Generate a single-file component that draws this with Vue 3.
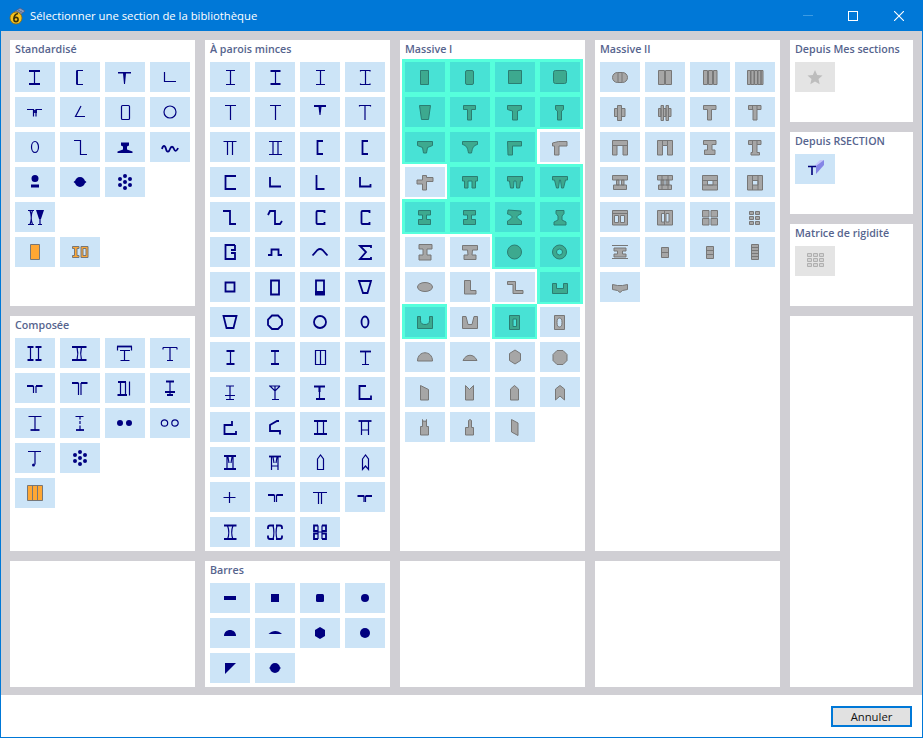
<template>
  <div class="window">
    <header class="titlebar">
      <svg class="app-icon" width="17" height="18" viewBox="0 0 17 18">
        <path d="M5 5l6-4 5 3-6 5z" fill="#8a9cc0" stroke="#46587f" stroke-width=".7" />
        <path d="M7 4l5 3M9 3l5 3M7 6l4-3M9 7l4-3" stroke="#46587f" stroke-width=".5" />
        <circle cx="7" cy="11" r="6" fill="#f6c21c" stroke="#8a6a10" stroke-width=".8" />
        <circle cx="7" cy="12.5" r="2.1" fill="none" stroke="#3c3208" stroke-width="1.6" />
        <path d="M5 12c0-3 1-5 4-5.5" fill="none" stroke="#3c3208" stroke-width="1.6" />
      </svg>
      <span class="title-text">Sélectionner une section de la bibliothèque</span>
      <div class="controls">
        <span class="ctl min"></span>
        <span class="ctl max"></span>
        <svg class="ctl-close" width="10" height="10" viewBox="0 0 10 10"><path d="M0 0l10 10M10 0L0 10" stroke="#fff" stroke-width="1.1" /></svg>
      </div>
    </header>

    <main class="board">
      <section v-for="p in panels" :key="p.id" class="panel" :class="p.id">
        <h3 v-if="p.title" class="panel-title">{{ p.title }}</h3>
        <div v-if="p.icons" class="tiles">
          <div
            v-for="(ic, i) in p.icons"
            :key="i"
            class="tile"
            :class="{ hl: p.hl && p.hl.includes(i), off: ic.off, first: ic.first }"
          >
            <svg width="40" height="30" viewBox="0 0 40 30">
              <path v-if="ic.f" class="fill" :d="ic.f" />
              <path v-if="ic.l" class="thin" :d="ic.l" />
              <path v-if="ic.b" class="bold" :d="ic.b" />
              <path v-if="ic.g" class="solid" fill-rule="evenodd" :d="ic.g" />
              <path v-if="ic.o" class="orange" fill-rule="evenodd" :d="ic.o" />
              <path v-if="ic.star" class="star" :d="ic.star" />
              <path v-if="ic.cells" class="cells" :d="ic.cells" />
              <template v-if="ic.bar">
                <path d="M19 12l6-6h4l-7 6z" fill="#c4c4fb" />
                <path d="M21 12l8-6v5l-8 9z" fill="#8585e6" />
                <path d="M13 12.5h8M17 12.5V21" fill="none" stroke="#00007a" stroke-width="1.6" />
              </template>
            </svg>
          </div>
        </div>
      </section>
    </main>

    <footer class="footer">
      <button class="cancel">Annuler</button>
    </footer>
  </div>
</template>

<script setup>
const R = (x, y, w, h) => `M${x} ${y}h${w}v${h}h${-w}z`
const O = (cx, cy, rx, ry = rx) =>
  `M${cx - rx} ${cy}a${rx} ${ry} 0 1 0 ${rx * 2} 0a${rx} ${ry} 0 1 0 ${-rx * 2} 0z`
const RR = (x, y, w, h, r) =>
  `M${x + r} ${y}h${w - 2 * r}a${r} ${r} 0 0 1 ${r} ${r}v${h - 2 * r}a${r} ${r} 0 0 1 ${-r} ${r}h${2 * r - w}a${r} ${r} 0 0 1 ${-r} ${-r}v${2 * r - h}a${r} ${r} 0 0 1 ${r} ${-r}z`
const dots = (r) =>
  [[20, 15], [20, 9], [20, 21], [15, 12], [25, 12], [15, 18], [25, 18]].map(([x, y]) => O(x, y, r)).join('')

const standard = [
  { b: 'M14 9h11M14 22h11', l: 'M19.5 9v13' },
  { l: 'M23 8.5h-6v14h6', b: 'M17 9v13' },
  { f: 'M13 10h13v1.5h-5L20 22h-1l-1-10.5h-5z' },
  { l: 'M14.5 10v9.5H26' },
  { l: 'M12 12.5h6.5v7M27 12.5h-6v7', b: 'M19 13v3M21 13v3' },
  { l: 'M21 9l-5.5 10.5H25' },
  { l: RR(16.5, 8.5, 8, 14, 1) },
  { l: O(20, 15, 6) },
  { l: O(20, 15, 3.5, 5.5) },
  { l: 'M14 8.5h6.5v14H27' },
  { f: 'M16 10.5h8v3l-2 1v3l5.5 2v1.5h-15v-1.5l5.5-2v-3l-2-1z' },
  { b: 'M12 17c1-4 3-4 4 0s3 3 4 0 3-3 4 0 3 2 4-1' },
  { f: O(20, 11.5, 3.5) + R(16, 17.5, 8, 3) },
  { f: O(20, 15, 5) + 'M13.5 15l3 2.5v-5zM26.5 15l-3-2.5v5z' },
  { f: dots(2) },
  { first: true, f: 'M21 8h8l-3 9h-2z', l: 'M13 8.5h6M13 22.5h6M15 8.5c1.5 4 1.5 10 0 14M17.5 8.5c-1.5 4-1.5 10 0 14M23 22.5h4M25 15v7.5' },
  { first: true, o: R(15.5, 7.5, 9, 15) },
  { o: 'M12.5 9.5h6.5v2h-2v7h2v2h-6.5v-2h2v-7h-2zM21 9.5h7v11h-7zM23 11.5v7h3v-7z' }
]

const composite = [
  { b: 'M12.5 9h6M20.5 9h6M12.5 22h6M20.5 22h6', l: 'M15.5 9v13M23.5 9v13' },
  { b: 'M12 9h14.5M12 22h14.5', l: 'M17 9c1 4 1 9 0 13M21.5 9c-1 4-1 9 0 13' },
  { b: 'M12 8.5h15', l: 'M12.5 8.5v4M26.5 8.5v4M15 12.5h10M19.5 12.5v10M15.5 22.5h9' },
  { l: 'M13 9.5v2M27 9.5v2M13 9.5h14M20 9.5v13M17 22.5h6' },
  { b: 'M12 13h6.5M21 13h6.5', l: 'M18.5 13v7M21 13v7' },
  { b: 'M12 10h6.5M21 10h6.5', l: 'M18.5 10v12M21 10v12' },
  { b: 'M12.5 22h9.5M13 9h8', l: 'M15.5 9v13M20.5 9v13M24.5 8.5v14' },
  { b: 'M16 8.5h8M15 19h10M17 22h6', l: 'M20 8.5v13.5' },
  { l: 'M13.5 8.5h13M20 8.5v14', b: 'M15.5 22h9' },
  { l: 'M15.5 8.5h8M20 8.5v3M20 13v3M20 17.5v5', b: 'M16 22h8' },
  { f: O(15, 15, 3) + O(24, 15, 3) },
  { l: O(14.5, 15, 3.2) + O(25, 15, 3.2) },
  { l: 'M13 8.5h13M20 8.5v13', f: O(18.5, 22, 1.5) },
  { f: dots(2) },
  { first: true, o: R(12.5, 7.5, 15, 15) + 'M17.5 7.5v15M22.5 7.5v15' }
]

const thin = [
  { l: 'M16 8.5h9M16 22.5h9M20.5 8.5v14' },
  { b: 'M15.5 9h10M15.5 22h10', l: 'M20.5 9v13' },
  { l: 'M16 8.5h9M16 22.5h9M20.5 8.5v14' },
  { l: 'M15.5 9.5V8.5h9.5v1M15.5 21.5v1h9.5v-1M20.5 8.5v14' },
  { l: 'M15 8.5h11M20.5 8.5v14.5' },
  { l: 'M15 8.5h11M20.5 8.5v14.5' },
  { f: 'M14 8h12v2h-4.5l-1 8h-1l-1-8H14z', l: 'M20 10v5' },
  { l: 'M14.5 9.5v-1h11v1M20 8.5v14.5' },
  { l: 'M13.5 9.5h13M17.5 9.5V23M22.5 9.5V23' },
  { l: 'M14 9.5h13M14 22.5h13M18 9.5v13M23 9.5v13' },
  { b: 'M23 9h-5.5v13H23' },
  { b: 'M23 9h-5.5v13H23' },
  { b: 'M26 9H15.5v13H26' },
  { b: 'M15 10v9.5h11' },
  { b: 'M16.5 8v14h8' },
  { b: 'M15 10v9.5h10.5V17' },
  { b: 'M13 9h7v13h6' },
  { b: 'M13 13l2-4h5v13h5l2-3' },
  { b: 'M24.5 11V9h-7a1 1 0 0 0-1 1v11a1 1 0 0 0 1 1h7v-2' },
  { b: 'M24.5 11V9h-7a1 1 0 0 0-1 1v11a1 1 0 0 0 1 1h7v-2' },
  { b: 'M25 8H15.5v14H25v-6h-4M25 8v5h-4' },
  { b: 'M13 18h3.5v-5.5h7V18H27' },
  { b: 'M12.5 18.5l5-5.5q2.5-2 5 0l5 5.5' },
  { b: 'M26 11V9H15l6 6-6 7h11v-2' },
  { b: R(15.5, 10.5, 9, 9) },
  { b: R(16, 8.5, 8, 14) },
  { b: R(16, 8.5, 8, 14), f: R(15, 19, 10, 4) },
  { b: 'M14 9h12l-3.5 12h-4.5z' },
  { b: 'M13.5 9h13l-3 12h-7z' },
  { b: 'M17 8.5h6l4 4v5.5l-4 4h-6l-4-4v-5.5z' },
  { b: O(20, 15, 6) },
  { b: O(20, 15, 3.5, 5.5) },
  { b: 'M16.5 9h8M16.5 22h8', l: 'M20.5 9v13' },
  { b: 'M16 9h8M16 22h8', l: 'M20 9v13' },
  { l: R(15.5, 8.5, 10, 14) + 'M20.5 8.5v14', f: R(15, 8, 11, 1) },
  { l: 'M15 9.5h11M20.5 9.5v13M17 22.5h7', b: 'M15 9.5h11' },
  { l: 'M16 9h8M20 9v13M15 18.5h10M16 22.5h8' },
  { l: 'M14 9h11M20 9v13M17 22.5h7M15 9l5 5 5-5' },
  { b: 'M14 9.5h11M16 22h9', l: 'M19.5 9v13', f: R(18.5, 9, 2, 6) },
  { b: 'M21 9h-6.5v13H26v-3.5' },
  { b: 'M22 9v4h-7.5v9H26v-3' },
  { b: 'M24 9h-2l-7 4v6h10v3.5' },
  { b: 'M14 9h13M14 22h13', l: 'M17.5 9v13M23.5 9v13' },
  { b: 'M13.5 9h13', l: 'M16.5 9v14M23.5 9v14M16.5 18h7' },
  { b: 'M14 9h12M14 22h12', l: 'M17 9v13M23 9v13M18 10l1 6M22 10l-1 6' },
  { b: 'M14 9.5h12', l: 'M16.5 9.5V23M23 9.5V23M16.5 19h6.5M18 10l1 6M22 10l-1 6' },
  { l: 'M17.5 12l3-4 3 4v10.5h-6z' },
  { l: 'M17.5 12l3-4 3 4v10.5l-3-3.5-3 3.5z' },
  { l: 'M13.5 15.5h12M19.5 10v11' },
  { l: 'M13 13h6.5v7M28 13h-6.5v7', b: 'M13 13h6M22 13h6' },
  { l: 'M13 10.5h14M18.5 10.5V22M21.5 10.5V22' },
  { l: 'M12 14h7v6M27 14h-6.5v6', b: 'M13 14h6M21 14h6' },
  { b: 'M14 8.5h12.5M14 22h12.5', l: 'M17.5 8.5c1.5 4 1.5 10 0 14M23 8.5c-1.5 4-1.5 10 0 14' },
  { b: 'M19 8.5h-4a2 2 0 0 0-2 2V12M19 22h-4a2 2 0 0 1-2-2v-1.5M21 8.5h4a2 2 0 0 1 2 2V12M21 22h4a2 2 0 0 0 2-2v-1.5', l: 'M18 8.5c1 4 1 10 0 13.5M22 8.5c-1 4-1 10 0 13.5' },
  { b: 'M18 8.5h-4V14h4M18 22h-4v-5.5h4M22 8.5h4V14h-4M22 22h4v-5.5h-4', l: 'M18 8.5V22M22 8.5V22M18 15h4' }
]

const bars = [
  { f: R(14, 13, 12, 4) },
  { f: R(16, 11, 8, 8) },
  { f: RR(16, 11, 8, 8, 1.5) },
  { f: O(20, 15, 4) },
  { f: 'M14 18c0-8 12-8 12 0z' },
  { f: 'M13.5 16c4-4 9.5-4 13.5 0z' },
  { f: 'M20 9l5 3v6l-5 3-5-3v-6z' },
  { f: O(20, 15, 5) },
  { first: true, f: 'M15 10h11L15 21z' },
  { f: O(20, 15, 5) + 'M14 15l2 1.5v-3zM26 15l-2-1.5v3z' }
]

const massive1 = [
  { g: R(15.5, 8.5, 8, 14) },
  { g: RR(15.5, 8.5, 8, 14, 1.5) },
  { g: R(13.5, 8.5, 13, 13) },
  { g: RR(13.5, 8.5, 13, 13, 2) },
  { g: 'M14.5 8.5h11l-2 14h-7z' },
  { g: 'M13.5 8.5h12v4h-4v10.5h-4V12.5h-4z' },
  { g: 'M12.5 8.5h14v4l-4 1.5v9h-5v-9l-5-1.5z' },
  { g: 'M15.5 8.5h8v4l-2 1.5v9h-4v-9l-2-1.5z' },
  { g: 'M12.5 9.5h15v4l-5 2-1 5.5h-3l-1-5.5-5-2z' },
  { g: 'M12.5 9.5h15v3c-4 1-5 3-6 8.5h-3c-1-5.5-2-7.5-6-8.5z' },
  { g: 'M12.5 9.5h14v4.5h-9V23h-4.5z' },
  { g: 'M18.5 9.5h8.5v4.5h-8v9h-4.5v-9h-2v-3z' },
  { g: 'M17.5 8.5h4v2h6.5v4h-6.5v8.5h-4v-6h-5.5v-4h5.5z' },
  { g: 'M12.5 9.5h15v4.5h-2v7h-3.5v-7h-4v7h-3.5v-7h-2z' },
  { g: 'M12.5 9.5h15v4.5h-2l-1 7h-3l-.5-7h-2l-.5 7h-3l-1-7h-2z' },
  { g: 'M12.5 9.5h15v3.5h-2l-2 8h-2l-1-8h-1l-1 8h-2l-2-8h-2z' },
  { g: 'M13.5 8.5h12v4.5h-4v4.5h4v5h-12v-5h4v-4.5h-4z' },
  { g: 'M13.5 8.5h12v4.5h-4v4.5h4v5h-12v-5h4v-4.5h-4z' },
  { g: 'M13 8l13 1v3c-3 1-4 2-4 3s1 2 4.5 4v3.5h-14V19c3.5-2 4.5-3 4.5-4s-1-2-4.5-3z' },
  { g: 'M16 8.5h8v3l-2 2.5v4l4 2v3H14v-3l4-2v-4l-2-2.5z' },
  { g: 'M14 7.5h13v4.5h-5v6h4v5H14v-5h4v-6h-4z' },
  { g: 'M12.5 8.5h15v4.5h-5l-.5 5h4v4.5H14V18h4l-.5-5h-5z' },
  { g: O(19.5, 15, 7) },
  { g: O(19.5, 15, 7) + O(19.5, 15, 3) },
  { g: O(20, 15, 7.5, 4.5) },
  { g: 'M14.5 8.5h6v10h5.5v3.5H14.5z' },
  { g: 'M12.5 9.5h8v9h7.5v3h-10v-9h-5.5z' },
  { g: 'M12.5 11.5h4v5h7v-5h4v10h-15z' },
  { g: 'M12.5 9.5h3v4c0 3 2 4 4.5 4s4.5-1 4.5-4v-4h3v12h-15z' },
  { g: 'M12.5 9.5h3.5l2 8h4l2-8h3.5v12h-15z' },
  { g: R(14.5, 8.5, 10, 14) + R(18, 12, 3.5, 7.5) },
  { g: R(14.5, 8.5, 10, 14) + O(19.5, 15.5, 2.5, 4.5) },
  { g: 'M12.5 19c0-11 15-11 15 0z' },
  { g: 'M13 18.5c3-7 11-7 14 0z' },
  { g: 'M20 8l5.5 3.5v7L20 22l-5.5-3.5v-7z' },
  { g: 'M17 8.5h6l4 4v6l-4 4h-6l-4-4v-6z' },
  { g: 'M15.5 8.5l8 4v10.5h-8z' },
  { g: 'M15.5 8.5l4 4 4-4V23h-8z' },
  { g: 'M15.5 12l4-3.5 4 3.5v11h-8z' },
  { g: 'M15.5 12l4.5-3.5 4.5 3.5v11l-4.5-4-4.5 4z' },
  { g: 'M15.5 14.5h2V7.5l1 2 1.5-.5 1 .5 .5-2v7h2v8.5h-8z' },
  { g: 'M15.5 15.5h3V8.5l1.5-1 1.5 1v7h2v7.5h-8z' },
  { g: 'M16.5 7.5l6.5 3.5v12.5l-6.5-3.5z' }
]

const massive2 = [
  { g: RR(12.5, 10.5, 15, 10, 5) + 'M18 10.5v10M22 10.5v10' },
  { g: R(13.5, 8.5, 6, 14) + R(20.5, 8.5, 6, 14) },
  { g: R(13.5, 8.5, 4, 14) + R(18.5, 8.5, 4, 14) + R(23.5, 8.5, 3.5, 14) },
  { g: R(12.5, 8.5, 3, 14) + R(16, 8.5, 3, 14) + R(19.5, 8.5, 3, 14) + R(23, 8.5, 3, 14) + R(26, 8.5, 2, 14) },
  { g: R(14.5, 11.5, 3, 8) + R(17.5, 8.5, 4, 15) + R(21.5, 11.5, 3.5, 8) },
  { g: R(13.5, 11.5, 2.5, 8) + R(16, 8.5, 2.5, 15) + R(18.5, 11.5, 2.5, 8) + R(21, 8.5, 2.5, 15) + R(23.5, 11.5, 2.5, 8) },
  { g: 'M13.5 8.5h12.5v4h-4.5V23h-4V12.5h-4z' },
  { g: 'M13.5 8.5h12.5v4h-4V23h-4V12.5h-4.5zM17.5 8.5v4M22 8.5v4' },
  { g: 'M12.5 8.5h15v14.5h-4.5V13.5h-6V23h-4.5zM12.5 13.5h15' },
  { g: 'M12.5 8.5h15v14.5h-5V13.5h-5V23h-5zM17.5 8.5v5M22.5 8.5v5' },
  { g: 'M13.5 8.5h12.5v4h-4v5.5h3v4.5H14.5V18h3v-5.5h-4z' },
  { g: 'M13.5 8.5h12.5v4h-4v8h2.5V23H16v-2.5h1.5v-8h-4zM17.5 8.5v4M22 8.5v4' },
  { g: R(12.5, 8.5, 15, 4.5) + R(13.5, 18, 13, 4.5) + R(16.5, 13, 2.5, 5) + R(21.5, 13, 2.5, 5) },
  { g: R(12.5, 8.5, 15, 4.5) + R(13.5, 18, 13, 4.5) + R(16, 13, 3, 5) + R(21, 13, 3, 5) + 'M17 8.5v14M23 8.5v14' },
  { g: R(12.5, 8.5, 15, 14.5) + R(17.5, 13.5, 5.5, 4.5) + 'M12.5 13.5h15M12.5 18h15' },
  { g: R(12.5, 8.5, 15, 14.5) + R(17.5, 13.5, 5.5, 4.5) + 'M17.5 8.5v14.5M23 8.5v14.5' },
  { g: R(12.5, 8.5, 15, 14.5) + R(14.5, 13.5, 4, 7) + R(20.5, 13.5, 4, 7) + 'M12.5 11.5h15' },
  { g: R(12.5, 8.5, 15, 14.5) + R(16.5, 11.5, 3, 8.5) + R(21, 11.5, 3, 8.5) + 'M19.5 8.5v14.5' },
  { g: R(12.5, 8.5, 6.5, 6.5) + R(21, 8.5, 6.5, 6.5) + R(12.5, 16.5, 6.5, 6.5) + R(21, 16.5, 6.5, 6.5) },
  { g: R(14.5, 9.5, 4, 3) + R(20.5, 9.5, 4, 3) + R(14.5, 14.5, 4, 3) + R(20.5, 14.5, 4, 3) + R(14.5, 19.5, 4, 3) + R(20.5, 19.5, 4, 3) },
  { g: 'M12 8.5h16M12 21.5h16M14 11h12v3h-3.5v3h3.5v3H14v-3h3.5v-3H14z' },
  { g: R(16.5, 10.5, 7, 10) + 'M16.5 15.5h7' },
  { g: R(16.5, 9.5, 7, 12) + 'M16.5 13.5h7M16.5 17.5h7' },
  { g: R(16.5, 7.5, 7, 15) + 'M16.5 10.5h7M16.5 13.5h7M16.5 16.5h7M16.5 19.5h7' },
  { first: true, g: 'M12.5 12.5l5 1h5l5-1v5l-5 1-2.5 2-2.5-2-5-1z' }
]

const hlMassive = [0, 1, 2, 3, 4, 5, 6, 7, 8, 9, 10, 13, 14, 15, 16, 17, 18, 19, 22, 23, 27, 28, 30]

const star = 'M20 8l2.2 5 5.3.5-4 3.5 1.2 5.3-4.7-2.8-4.7 2.8 1.2-5.3-4-3.5 5.3-.5z'
const matrix = [9, 14, 19]
  .flatMap((y) => [12, 18, 24].map((x) => R(x + 0.5, y - 1.5, 4, 3)))
  .join('')

const panels = [
  { id: 'p-std', title: 'Standardisé', icons: standard },
  { id: 'p-comp', title: 'Composée', icons: composite },
  { id: 'p-empty1' },
  { id: 'p-thin', title: 'À parois minces', icons: thin },
  { id: 'p-bars', title: 'Barres', icons: bars },
  { id: 'p-m1', title: 'Massive I', icons: massive1, hl: hlMassive },
  { id: 'p-empty2' },
  { id: 'p-m2', title: 'Massive II', icons: massive2 },
  { id: 'p-empty3' },
  { id: 'p-mine', title: 'Depuis Mes sections', icons: [{ star, off: true }] },
  { id: 'p-rsec', title: 'Depuis RSECTION', icons: [{ bar: true }] },
  { id: 'p-mat', title: 'Matrice de rigidité', icons: [{ cells: matrix, off: true }] },
  { id: 'p-empty4' }
]
</script>

<style>
html,
body {
  margin: 0;
  background: #fff;
}
</style>

<style scoped>
.window {
  box-sizing: border-box;
  width: 923px;
  height: 738px;
  display: flex;
  flex-direction: column;
  border: 1px solid #0078d7;
  border-top: 0;
  font-family: "Open Sans", "Noto Sans", sans-serif;
  overflow: hidden;
}

.titlebar {
  flex: 0 0 31px;
  display: flex;
  align-items: center;
  background: #0078d7;
  color: #fff;
  padding-left: 8px;
}

.app-icon {
  margin-right: 4px;
}

.title-text {
  font-size: 11.3px;
}

.controls {
  margin-left: auto;
  display: flex;
  align-items: center;
  padding-right: 18px;
}

.ctl.min {
  width: 10px;
  height: 1px;
  background: #3c9be3;
  margin-right: 35px;
}

.ctl.max {
  box-sizing: border-box;
  width: 10px;
  height: 10px;
  border: 1px solid #fff;
  margin-right: 36px;
}

.ctl-close {
  display: block;
}

.board {
  flex: 1;
  display: grid;
  grid-template-columns: repeat(4, 185px) 123px;
  grid-template-rows: 82px 82px 82px 235px 126px;
  gap: 10px;
  padding: 9px 9px 8px;
  background: #d0cfd4;
}

.panel {
  background: #fff;
  padding: 0 5px;
  min-width: 0;
}

.panel-title {
  margin: 0;
  height: 22px;
  line-height: 19px;
  font-size: 10.7px;
  font-weight: 600;
  color: #56648e;
  white-space: nowrap;
}

.tiles {
  display: grid;
  grid-template-columns: repeat(4, 40px);
  grid-auto-rows: 30px;
  gap: 5px;
}

.tile {
  width: 40px;
  height: 30px;
  background: #cce4f7;
  box-shadow: 0 0 0 3px #fff;
}

.tile.first {
  grid-column: 1;
}

.tile svg {
  display: block;
}

.tile.off {
  background: #e4e4e4;
}

.tile.hl {
  background: #48e2d5;
  box-shadow: 0 0 0 3px #56ffdc;
}

.fill {
  fill: #000080;
}

.thin {
  fill: none;
  stroke: #000080;
  stroke-width: 1.2;
}

.bold {
  fill: none;
  stroke: #000080;
  stroke-width: 1.8;
}

.solid {
  fill: #a6a6a6;
  stroke: #777;
  stroke-width: 1;
}

.hl .solid {
  fill: #3da98f;
  stroke: #2b7d72;
}

.orange {
  fill: #ffa733;
  stroke: #777;
  stroke-width: 1;
}

.star {
  fill: #bdbdbd;
}

.cells {
  fill: #d4d4d4;
  stroke: #b0b0b0;
  stroke-width: 1;
}

.p-std { grid-column: 1; grid-row: 1 / 4; }
.p-comp { grid-column: 1; grid-row: 4; }
.p-empty1 { grid-column: 1; grid-row: 5; }
.p-thin { grid-column: 2; grid-row: 1 / 5; }
.p-bars { grid-column: 2; grid-row: 5; }
.p-m1 { grid-column: 3; grid-row: 1 / 5; }
.p-empty2 { grid-column: 3; grid-row: 5; }
.p-m2 { grid-column: 4; grid-row: 1 / 5; }
.p-empty3 { grid-column: 4; grid-row: 5; }
.p-mine { grid-column: 5; grid-row: 1; }
.p-rsec { grid-column: 5; grid-row: 2; }
.p-mat { grid-column: 5; grid-row: 3; }
.p-empty4 { grid-column: 5; grid-row: 4 / 6; }

.footer {
  flex: 0 0 42px;
  display: flex;
  align-items: flex-start;
  justify-content: flex-end;
  background: #fff;
  padding: 11px 10px 0 0;
  box-sizing: border-box;
}

.cancel {
  box-sizing: border-box;
  width: 81px;
  height: 21px;
  padding: 0;
  background: #e1e1e1;
  border: 2px solid #0078d7;
  color: #111;
  font-family: inherit;
  font-size: 11.3px;
  line-height: 15px;
}
</style>
